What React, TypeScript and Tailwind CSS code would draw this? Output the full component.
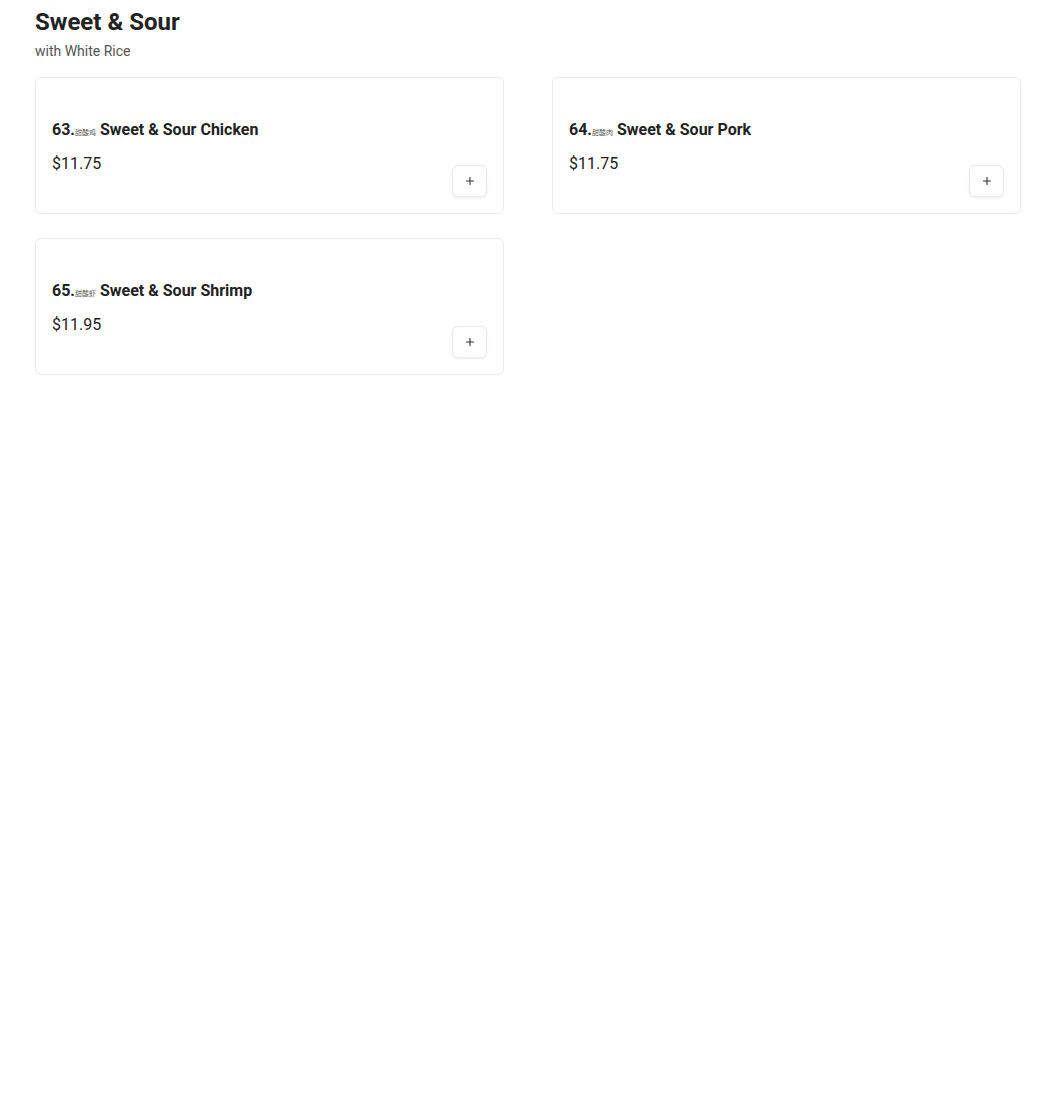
import { Plus } from "lucide-react";

interface Item {
  no: number;
  zh: string;
  name: string;
  price: string;
}

const items: Item[] = [
  { no: 63, zh: "甜酸鸡", name: "Sweet & Sour Chicken", price: "$11.75" },
  { no: 64, zh: "甜酸肉", name: "Sweet & Sour Pork", price: "$11.75" },
  { no: 65, zh: "甜酸虾", name: "Sweet & Sour Shrimp", price: "$11.95" },
];

function ItemCard({ item }: { item: Item }) {
  return (
    <div className="flex h-[137px] rounded-md border border-[#ebebeb] bg-white px-4 pb-4 pt-4">
      <div className="flex-1 pt-[24px]">
        <h3 className="text-base font-bold leading-6 text-[#222]">
          {item.no}.
          <span className="text-[7px] font-normal text-[#555]">{item.zh}</span>{" "}
          {item.name}
        </h3>
        <p className="mt-[7px] text-base leading-6 text-[#222]">{item.price}</p>
      </div>
      <button className="flex h-8 w-[35px] items-center justify-center self-end rounded-md border border-[#ececec] bg-white shadow-[0_1px_3px_rgba(0,0,0,0.08)]">
        <Plus className="h-3 w-3 text-[#333]" strokeWidth={2.25} />
      </button>
    </div>
  );
}

export default function App() {
  return (
    <div
      className="min-h-[1106px] bg-white px-[35px] pt-[6px]"
      style={{ fontFamily: 'Roboto, "Noto Sans CJK SC", sans-serif' }}
    >
      <h1 className="text-2xl font-bold leading-8 text-[#222]">Sweet &amp; Sour</h1>
      <p className="mt-[3px] text-sm leading-5 text-[#555]">with White Rice</p>
      <div className="mt-[16px] grid grid-cols-[469px_469px] gap-x-[48px] gap-y-[24px]">
        {items.map((item) => (
          <ItemCard key={item.no} item={item} />
        ))}
      </div>
    </div>
  );
}
